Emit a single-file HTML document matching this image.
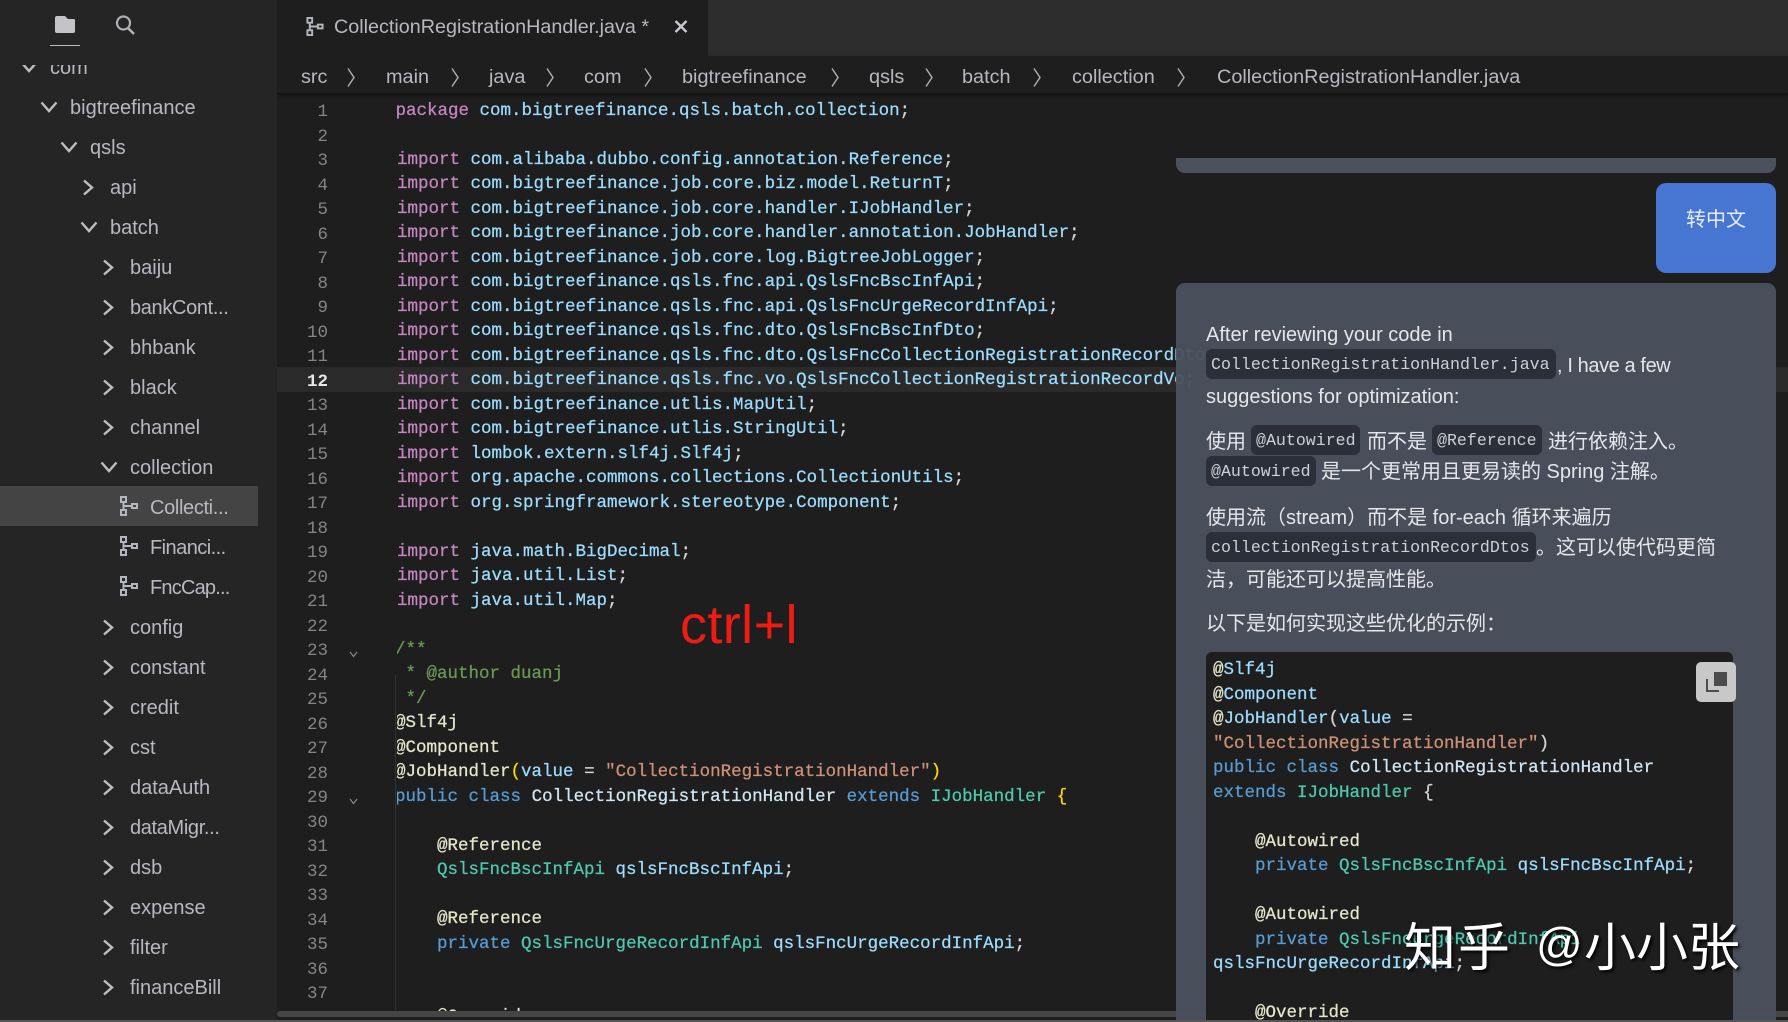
<!DOCTYPE html>
<html lang="zh"><head><meta charset="utf-8"><title>CollectionRegistrationHandler.java</title>
<style>
html,body{margin:0;padding:0;width:1788px;height:1022px;overflow:hidden;background:#1e1e1e}
body{position:relative;font-family:"Liberation Sans","Noto Sans CJK SC",sans-serif;color:#b8b8c0}
.a{position:absolute}
#side{position:absolute;left:0;top:0;width:277px;height:1022px;background:#252526}
#rows{position:absolute;left:0;top:0;width:277px;height:1017px;clip-path:inset(65px 0 0 0)}
.n{position:absolute;height:40px;line-height:40px;margin-top:1px;font-size:20px;white-space:nowrap;color:#b8b8c0}
.f{letter-spacing:-.35px}
#rows svg,.ic{position:absolute}
.r{width:12px;height:17px}.d{width:18px;height:12px}
.j{width:18px;height:20px}
.bc{position:absolute;top:62px;height:30px;line-height:30px;font-size:19.85px;color:#b8b8c0;white-space:nowrap}
.sep{position:absolute;top:68px;width:8px;height:19px}
pre{margin:0;position:absolute;font-family:"Liberation Mono",monospace;font-size:17.5px;line-height:24.5px;white-space:pre;-webkit-text-stroke:.25px}
#nums{left:270px;top:100.2px;width:58px;text-align:right;color:#858585;-webkit-text-stroke:0}
#nums b{color:#e8e8e8}
#code{left:397px;top:98.75px;color:#9cdcfe;height:912px;overflow:hidden;width:1300px}
.k{color:#c586c0}.b{color:#569cd6}.g{color:#4ec9b0}.s{color:#ce9178}.c{color:#6a9955}.y{color:#ffd700}.w{color:#e6e6cc}.o{color:#d4d4d4}.l{color:#cfe6f5}
.t{position:absolute;line-height:30px;height:30px;margin-top:1px;font-size:20px;color:#e4e6ea;white-space:nowrap}
.p{position:absolute;height:30px;line-height:30px;padding-top:1px;background:#2a2f39;border-radius:6px;font-family:"Liberation Mono",monospace;font-size:16.6px;color:#cdd0d5;white-space:nowrap;box-sizing:border-box;padding-left:5px}
.wm{position:absolute;color:#fff;white-space:nowrap;text-shadow:2px 2px 3px rgba(0,0,0,.95);line-height:60px;height:60px}
</style></head><body>
<svg width="0" height="0" style="position:absolute"><defs>
<symbol id="cr" viewBox="0 0 12 17"><polyline points="2,1.5 10,8.5 2,15.5" fill="none" stroke="#bdbdc2" stroke-width="2.4"/></symbol>
<symbol id="cd" viewBox="0 0 18 12"><polyline points="1.5,1.5 9,10 16.5,1.5" fill="none" stroke="#bdbdc2" stroke-width="2.4"/></symbol>
<symbol id="jv" viewBox="0 0 18 20"><g fill="none" stroke="#b4b7c0" stroke-width="2"><rect x="1" y="1" width="5" height="5"/><rect x="1" y="14" width="5" height="5"/><rect x="12" y="8" width="5" height="4"/><path d="M3.5 6V14M3.5 10H12"/></g></symbol>
<symbol id="sp" viewBox="0 0 8 19"><polyline points="1,0.5 7,9.5 1,18.5" fill="none" stroke="#b0b0b8" stroke-width="1.4"/></symbol>
</defs></svg>

<div class="a" style="left:708px;top:0;width:1080px;height:56px;background:#2d2d2d"></div>

<div class="a" style="left:277px;top:367px;width:1511px;height:25px;background:#2a2a2a"></div>
<div class="a" style="left:395px;top:675px;width:1px;height:335px;background:#333"></div>

<pre id="nums">1
2
3
4
5
6
7
8
9
10
11
<b>12</b>
13
14
15
16
17
18
19
20
21
22
23
24
25
26
27
28
29
30
31
32
33
34
35
36
37</pre>

<pre id="code"><span style="margin-left:-1.5px"><span class="k">package</span> com.bigtreefinance.qsls.batch.collection<span class="o">;</span></span>

<span class="k">import</span> com.alibaba.dubbo.config.annotation.Reference<span class="o">;</span>
<span class="k">import</span> com.bigtreefinance.job.core.biz.model.ReturnT<span class="o">;</span>
<span class="k">import</span> com.bigtreefinance.job.core.handler.IJobHandler<span class="o">;</span>
<span class="k">import</span> com.bigtreefinance.job.core.handler.annotation.JobHandler<span class="o">;</span>
<span class="k">import</span> com.bigtreefinance.job.core.log.BigtreeJobLogger<span class="o">;</span>
<span class="k">import</span> com.bigtreefinance.qsls.fnc.api.QslsFncBscInfApi<span class="o">;</span>
<span class="k">import</span> com.bigtreefinance.qsls.fnc.api.QslsFncUrgeRecordInfApi<span class="o">;</span>
<span class="k">import</span> com.bigtreefinance.qsls.fnc.dto.QslsFncBscInfDto<span class="o">;</span>
<span class="k">import</span> com.bigtreefinance.qsls.fnc.dto.QslsFncCollectionRegistrationRecordDto<span class="o">;</span>
<span class="k">import</span> com.bigtreefinance.qsls.fnc.vo.QslsFncCollectionRegistrationRecordVo<span class="o">;</span>
<span class="k">import</span> com.bigtreefinance.utlis.MapUtil<span class="o">;</span>
<span class="k">import</span> com.bigtreefinance.utlis.StringUtil<span class="o">;</span>
<span class="k">import</span> lombok.extern.slf4j.Slf4j<span class="o">;</span>
<span class="k">import</span> org.apache.commons.collections.CollectionUtils<span class="o">;</span>
<span class="k">import</span> org.springframework.stereotype.Component<span class="o">;</span>

<span class="k">import</span> java.math.BigDecimal<span class="o">;</span>
<span class="k">import</span> java.util.List<span class="o">;</span>
<span class="k">import</span> java.util.Map<span class="o">;</span>

<span style="margin-left:-2px" class="c">/**</span>
<span style="margin-left:-2px" class="c"> * @author duanj</span>
<span style="margin-left:-2px" class="c"> */</span>
<span style="margin-left:-2px" class="w">@Slf4j</span>
<span style="margin-left:-2px" class="w">@Component</span>
<span style="margin-left:-2px"><span class="w">@JobHandler</span><span class="y">(</span>value <span class="o">=</span> <span class="s">"CollectionRegistrationHandler"</span><span class="y">)</span></span>
<span style="margin-left:-2px"><span class="b">public</span> <span class="b">class</span> <span class="l">CollectionRegistrationHandler</span> <span class="b">extends</span> <span class="g">IJobHandler</span> <span class="y">{</span></span>

<span style="margin-left:-2px">    <span class="w">@Reference</span></span>
<span style="margin-left:-2px">    <span class="g">QslsFncBscInfApi</span> qslsFncBscInfApi<span class="o">;</span></span>

<span style="margin-left:-2px">    <span class="w">@Reference</span></span>
<span style="margin-left:-2px">    <span class="b">private</span> <span class="g">QslsFncUrgeRecordInfApi</span> qslsFncUrgeRecordInfApi<span class="o">;</span></span>


<span style="margin-left:-2px">    <span class="w">@Override</span></span></pre>

<svg class="ic" style="left:349px;top:651px" width="9" height="7" viewBox="0 0 9 7"><polyline points="1,1 4.5,5.5 8,1" fill="none" stroke="#888" stroke-width="1.2"/></svg>
<svg class="ic" style="left:349px;top:798px" width="9" height="7" viewBox="0 0 9 7"><polyline points="1,1 4.5,5.5 8,1" fill="none" stroke="#888" stroke-width="1.2"/></svg>

<div class="a" style="left:277px;top:56px;width:1511px;height:37px;background:#1e1e1e;box-shadow:0 2px 4px rgba(0,0,0,.5)"></div>
<div class="bc" style="left:301px">src</div><svg class="sep" style="left:347px"><use href="#sp"/></svg>
<div class="bc" style="left:386px">main</div><svg class="sep" style="left:451px"><use href="#sp"/></svg>
<div class="bc" style="left:489px">java</div><svg class="sep" style="left:546px"><use href="#sp"/></svg>
<div class="bc" style="left:584px">com</div><svg class="sep" style="left:644px"><use href="#sp"/></svg>
<div class="bc" style="left:682px">bigtreefinance</div><svg class="sep" style="left:831px"><use href="#sp"/></svg>
<div class="bc" style="left:869px">qsls</div><svg class="sep" style="left:925px"><use href="#sp"/></svg>
<div class="bc" style="left:962px">batch</div><svg class="sep" style="left:1033px"><use href="#sp"/></svg>
<div class="bc" style="left:1072px">collection</div><svg class="sep" style="left:1177px"><use href="#sp"/></svg>
<div class="bc" style="left:1217px">CollectionRegistrationHandler.java</div>

<div class="a" style="left:277px;top:0;width:431px;height:56px;background:#1e1e1e"></div>
<svg class="ic j" style="left:306px;top:17px;height:19px"><use href="#jv"/></svg>
<div class="a" style="left:334px;top:12px;height:30px;line-height:30px;font-size:19.75px;color:#b8b8c0;white-space:nowrap">CollectionRegistrationHandler.java *</div>
<svg class="ic" style="left:674px;top:20px" width="14" height="13" viewBox="0 0 14 13"><path d="M1.5 1L12.5 12M12.5 1L1.5 12" stroke="#c8c8d0" stroke-width="2.4" fill="none"/></svg>

<div id="side">
<svg class="ic" style="left:55px;top:16px" width="20" height="17" viewBox="0 0 20 17"><path d="M0 2a2 2 0 0 1 2-2H10L13 3H19a1 1 0 0 1 1 1V15a2 2 0 0 1-2 2H2a2 2 0 0 1-2-2Z" fill="#c4c4c8"/></svg>
<div class="a" style="left:50px;top:45px;width:30px;height:1px;background:#bbb"></div>
<svg class="ic" style="left:115px;top:15px" width="20" height="20" viewBox="0 0 20 20"><circle cx="8.5" cy="8" r="6.5" fill="none" stroke="#b0b0b4" stroke-width="2.2"/><path d="M13 13L19 19" stroke="#b0b0b4" stroke-width="2.6"/></svg>
<div class="a" style="left:0;top:486px;width:258px;height:40px;background:#444"></div>
<div id="rows">
<svg class="d" style="left:20px;top:61px"><use href="#cd"/></svg><div class="n" style="left:50px;top:47px">com</div>
<svg class="d" style="left:40px;top:101px"><use href="#cd"/></svg><div class="n" style="left:70px;top:87px">bigtreefinance</div>
<svg class="d" style="left:60px;top:141px"><use href="#cd"/></svg><div class="n" style="left:90px;top:127px">qsls</div>
<svg class="r" style="left:82px;top:179px"><use href="#cr"/></svg><div class="n" style="left:110px;top:167px">api</div>
<svg class="d" style="left:80px;top:221px"><use href="#cd"/></svg><div class="n" style="left:110px;top:207px">batch</div>
<svg class="r" style="left:102px;top:259px"><use href="#cr"/></svg><div class="n" style="left:130px;top:247px">baiju</div>
<svg class="r" style="left:102px;top:299px"><use href="#cr"/></svg><div class="n f" style="left:130px;top:287px">bankCont...</div>
<svg class="r" style="left:102px;top:339px"><use href="#cr"/></svg><div class="n" style="left:130px;top:327px">bhbank</div>
<svg class="r" style="left:102px;top:379px"><use href="#cr"/></svg><div class="n" style="left:130px;top:367px">black</div>
<svg class="r" style="left:102px;top:419px"><use href="#cr"/></svg><div class="n" style="left:130px;top:407px">channel</div>
<svg class="d" style="left:100px;top:461px"><use href="#cd"/></svg><div class="n" style="left:130px;top:447px">collection</div>
<svg class="j" style="left:120px;top:496px"><use href="#jv"/></svg><div class="n f" style="left:150px;top:487px">Collecti...</div>
<svg class="j" style="left:120px;top:536px"><use href="#jv"/></svg><div class="n f" style="left:150px;top:527px;letter-spacing:-.55px">Financi...</div>
<svg class="j" style="left:120px;top:576px"><use href="#jv"/></svg><div class="n f" style="left:150px;top:567px;letter-spacing:-.8px">FncCap...</div>
<svg class="r" style="left:102px;top:619px"><use href="#cr"/></svg><div class="n" style="left:130px;top:607px">config</div>
<svg class="r" style="left:102px;top:659px"><use href="#cr"/></svg><div class="n" style="left:130px;top:647px">constant</div>
<svg class="r" style="left:102px;top:699px"><use href="#cr"/></svg><div class="n" style="left:130px;top:687px">credit</div>
<svg class="r" style="left:102px;top:739px"><use href="#cr"/></svg><div class="n" style="left:130px;top:727px">cst</div>
<svg class="r" style="left:102px;top:779px"><use href="#cr"/></svg><div class="n" style="left:130px;top:767px">dataAuth</div>
<svg class="r" style="left:102px;top:819px"><use href="#cr"/></svg><div class="n f" style="left:130px;top:807px">dataMigr...</div>
<svg class="r" style="left:102px;top:859px"><use href="#cr"/></svg><div class="n" style="left:130px;top:847px">dsb</div>
<svg class="r" style="left:102px;top:899px"><use href="#cr"/></svg><div class="n" style="left:130px;top:887px">expense</div>
<svg class="r" style="left:102px;top:939px"><use href="#cr"/></svg><div class="n" style="left:130px;top:927px">filter</div>
<svg class="r" style="left:102px;top:979px"><use href="#cr"/></svg><div class="n" style="left:130px;top:967px">financeBill</div>
</div></div>

<div class="a" style="left:277px;top:1011px;width:1511px;height:6px;background:#454545;border-radius:3px 0 0 3px"></div>
<div class="a" style="left:277px;top:1017px;width:1511px;height:3px;background:#1e1e1e"></div>

<div class="a" style="left:680px;top:585px;height:80px;line-height:80px;font-size:54px;color:#ee1c14;white-space:nowrap;font-weight:400;letter-spacing:0.4px">ctrl+l</div>

<div class="a" style="left:1176px;top:158px;width:600px;height:15px;background:#4b515d;border-radius:0 0 9px 9px"></div>
<div class="a" style="left:1656px;top:183px;width:120px;height:90px;background:#4675d2;border-radius:10px"></div>
<div class="t" style="left:1686px;top:204px;color:#e6edf8">转中文</div>

<div class="a" style="left:1176px;top:283px;width:600px;height:737px;background:rgba(75,81,93,.96);border-radius:9px 9px 0 0"></div>
<div class="t" style="left:1206px;top:319px">After reviewing your code in</div>
<div class="p" style="left:1206px;top:349px;width:350px">CollectionRegistrationHandler.java</div>
<div class="t" style="left:1557px;top:350px;letter-spacing:-.4px">, I have a few</div>
<div class="t" style="left:1206px;top:381px">suggestions for optimization:</div>
<div class="t" style="left:1206px;top:426px">使用</div>
<div class="p" style="left:1251px;top:425px;width:109px">@Autowired</div>
<div class="t" style="left:1367px;top:426px">而不是</div>
<div class="p" style="left:1432px;top:425px;width:110px">@Reference</div>
<div class="t" style="left:1548px;top:426px">进行依赖注入。</div>
<div class="p" style="left:1206px;top:456px;width:110px">@Autowired</div>
<div class="t" style="left:1321px;top:456px">是一个更常用且更易读的 Spring 注解。</div>
<div class="t" style="left:1206px;top:502px">使用流（stream）而不是 for-each 循环来遍历</div>
<div class="p" style="left:1206px;top:532px;width:330px">collectionRegistrationRecordDtos</div>
<div class="t" style="left:1536px;top:532px">。这可以使代码更简</div>
<div class="t" style="left:1206px;top:564px">洁，可能还可以提高性能。</div>
<div class="t" style="left:1206px;top:608px">以下是如何实现这些优化的示例：</div>

<div class="a" style="left:1206px;top:652px;width:527px;height:368px;background:#1e1e1e;border-radius:6px 6px 0 0;overflow:hidden">
<pre style="left:7px;top:6px;color:#9cdcfe"><span class="w">@</span>Slf4j
<span class="w">@</span>Component
<span class="w">@</span>JobHandler<span class="o">(</span>value <span class="o">=</span>
<span class="s">"CollectionRegistrationHandler"</span><span class="o">)</span>
<span class="b">public</span> <span class="b">class</span> <span class="l">CollectionRegistrationHandler</span>
<span class="b">extends</span> <span class="g">IJobHandler</span> <span class="o">{</span>

    <span class="w">@Autowired</span>
    <span class="b">private</span> <span class="g">QslsFncBscInfApi</span> qslsFncBscInfApi<span class="o">;</span>

    <span class="w">@Autowired</span>
    <span class="b">private</span> <span class="g">QslsFncUrgeRecordInfApi</span>
qslsFncUrgeRecordInfApi<span class="o">;</span>

    <span class="w">@Override</span></pre>
</div>
<div class="a" style="left:1696px;top:662px;width:40px;height:40px;background:#c8c8c8;border-radius:5px"></div>
<svg class="ic" style="left:1706px;top:672px" width="21" height="20" viewBox="0 0 21 20"><rect x="8" y="0" width="13" height="14" fill="#4c4c4c"/><path d="M1 7V19H13" fill="none" stroke="#4c4c4c" stroke-width="2"/></svg>

<div class="wm" style="left:1404px;top:914px;font-size:52px;letter-spacing:2px;font-family:'Noto Sans CJK SC',sans-serif">知乎</div>
<div class="wm" style="left:1536px;top:914px;font-size:46px;font-family:'Liberation Sans',sans-serif">@</div>
<div class="wm" style="left:1584px;top:914px;font-size:52px;font-family:'Noto Sans CJK SC',sans-serif">小小张</div>

<div class="a" style="left:0;top:1020px;width:1788px;height:2px;background:#555"></div>
</body></html>
